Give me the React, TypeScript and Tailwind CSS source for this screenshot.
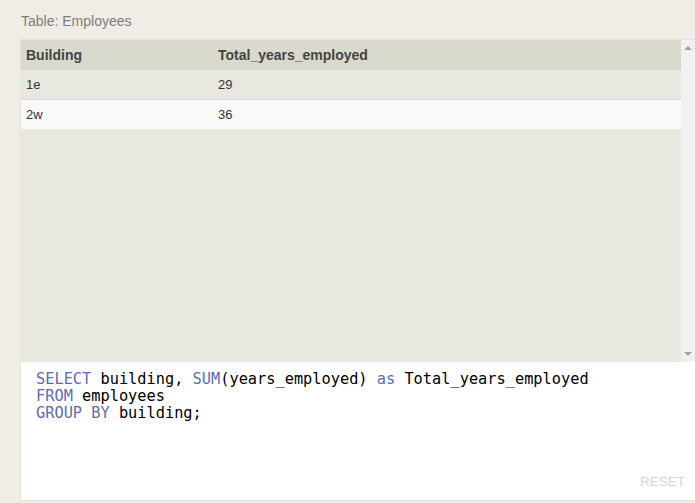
import React from "react";

const rows = [
  { b: "1e", t: "29" },
  { b: "2w", t: "36" },
];

export default function App() {
  return (
    <div className="w-[695px] h-[503px] bg-[#efede6] overflow-hidden" style={{ fontFamily: '"Liberation Sans", Arial, sans-serif' }}>
      <div className="pl-[21px] pt-[13px] h-[39px] text-[14px] leading-[17px] text-[#7d7d7d]">Table: Employees</div>
      <div className="ml-[20px] flex h-[323px] border-t border-l border-[#e4e2da] bg-[#e9e8e0]">
        <div className="flex-1">
          <div className="flex h-[30px] items-center bg-[#dad9ce] text-[14px] font-bold text-[#444]">
            <div className="w-[191px] pl-[5px]">Building</div>
            <div className="pl-[6px]">Total_years_employed</div>
          </div>
          {rows.map((r, i) => (
            <div
              key={r.b}
              className={
                i % 2 === 0
                  ? "flex h-[30px] items-center bg-[#e9e8e0] border-b border-[#dddcd5] text-[13px] text-[#333]"
                  : "flex h-[29px] items-center bg-[#f9f9f9] text-[13px] text-[#333]"
              }
            >
              <div className="w-[191px] pl-[5px]">{r.b}</div>
              <div className="pl-[6px]">{r.t}</div>
            </div>
          ))}
        </div>
        <div className="w-[14px] bg-[#f1f1f1] flex flex-col items-center justify-between pt-[6px] pb-[6px]">
          <div className="w-0 h-0 border-l-[4px] border-r-[4px] border-b-[4px] border-l-transparent border-r-transparent border-b-[#a3a3a3]" />
          <div className="w-0 h-0 border-l-[4px] border-r-[4px] border-t-[4px] border-l-transparent border-r-transparent border-t-[#a3a3a3]" />
        </div>
      </div>
      <div className="ml-[20px] h-[139px] bg-white border-l border-b border-[#e4e2d8] relative">
        <pre
          className="pl-[15px] pt-[9px] text-[15.3px] leading-[17px] text-black"
          style={{ fontFamily: '"DejaVu Sans Mono", monospace' }}
        >
          <span className="text-[#5d6db0]">SELECT</span> building, <span className="text-[#5d6db0]">SUM</span>(years_employed) <span className="text-[#5d6db0]">as</span> Total_years_employed{"\n"}
          <span className="text-[#5d6db0]">FROM</span> employees{"\n"}
          <span className="text-[#5d6db0]">GROUP BY</span> building;
        </pre>
        <div className="absolute right-[10px] bottom-[8px] text-[13.5px] text-[#d6d6d6]">RESET</div>
      </div>
    </div>
  );
}
